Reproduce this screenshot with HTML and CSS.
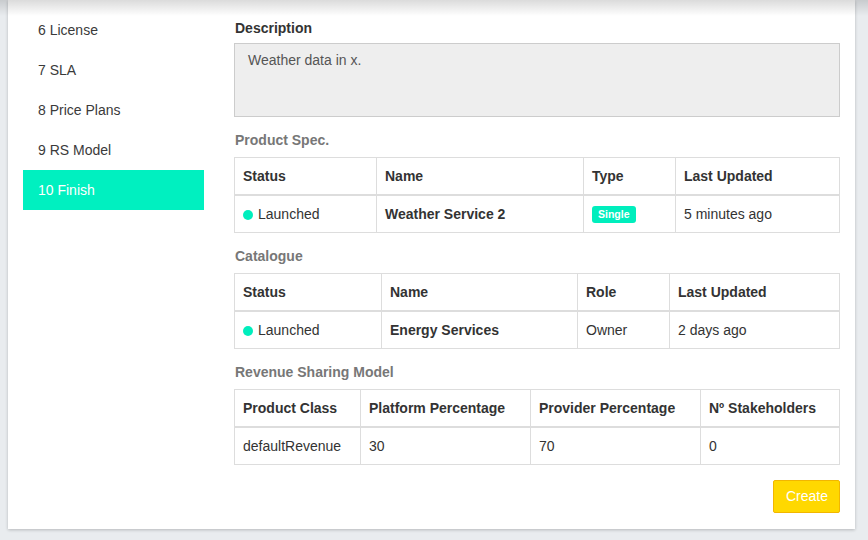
FILE: index.html
```html
<!DOCTYPE html>
<html>
<head>
<meta charset="utf-8">
<link rel="stylesheet" href="styles.css">
</head>
<body>
<div class="top-shade"></div>
<div class="card">
  <nav class="steps">
    <div class="step">6 License</div>
    <div class="step">7 SLA</div>
    <div class="step">8 Price Plans</div>
    <div class="step">9 RS Model</div>
    <div class="step active">10 Finish</div>
  </nav>
  <main class="main">
    <div class="label">Description</div>
    <div class="desc">Weather data in x.</div>

    <div class="section">Product Spec.</div>
    <table class="tbl spec">
      <colgroup><col class="c1"><col class="c2"><col class="c3"><col class="c4"></colgroup>
      <thead><tr><th>Status</th><th>Name</th><th>Type</th><th>Last Updated</th></tr></thead>
      <tbody><tr><td><span class="dot"></span>Launched</td><td class="strong">Weather Service 2</td><td><span class="badge">Single</span></td><td>5 minutes ago</td></tr></tbody>
    </table>

    <div class="section">Catalogue</div>
    <table class="tbl cat">
      <colgroup><col class="c1"><col class="c2"><col class="c3"><col class="c4"></colgroup>
      <thead><tr><th>Status</th><th>Name</th><th>Role</th><th>Last Updated</th></tr></thead>
      <tbody><tr><td><span class="dot"></span>Launched</td><td class="strong">Energy Services</td><td>Owner</td><td>2 days ago</td></tr></tbody>
    </table>

    <div class="section">Revenue Sharing Model</div>
    <table class="tbl rs">
      <colgroup><col class="c1"><col class="c2"><col class="c3"><col class="c4"></colgroup>
      <thead><tr><th>Product Class</th><th>Platform Percentage</th><th>Provider Percentage</th><th>Nº Stakeholders</th></tr></thead>
      <tbody><tr><td>defaultRevenue</td><td>30</td><td>70</td><td>0</td></tr></tbody>
    </table>

    <div class="actions"><button class="btn">Create</button></div>
  </main>
</div>
</body>
</html>
```

FILE: styles.css
```css
* { box-sizing: border-box; }
html, body { margin: 0; padding: 0; }
body {
  background: #e9ecef;
  font-family: "Liberation Sans", Arial, Helvetica, sans-serif;
  font-size: 14px;
  line-height: 20px;
  color: #333;
  width: 868px;
  height: 540px;
  overflow: hidden;
}
.top-shade {
  position: absolute;
  left: 0; top: 0;
  width: 868px;
  height: 16px;
  background: linear-gradient(to bottom, rgba(0,0,0,0.14), rgba(0,0,0,0));
  pointer-events: none;
  z-index: 2;
}
.card {
  margin-left: 8px;
  width: 847px;
  background: #fff;
  box-shadow: 0 1px 3px rgba(0,0,0,0.22);
  display: flex;
  gap: 30px;
  padding: 10px 15px 16px 15px;
}
.steps { width: 181px; flex: none; }
.step {
  height: 40px;
  line-height: 40px;
  padding-left: 15px;
  color: #3a3a3a;
}
.step.active { background: #00f0c0; color: #fff; }
.main { flex: 1; padding-top: 8px; }
.label { font-weight: bold; margin-bottom: 5px; padding-left: 1px; }
.desc {
  height: 74px;
  background: #eee;
  border: 1px solid #ccc;
  padding: 6px 13px;
  color: #555;
}
.section {
  font-weight: bold;
  color: #777;
  margin: 13px 0 7px;
  padding-left: 1px;
}
.tbl {
  width: 605px;
  border-collapse: collapse;
  table-layout: fixed;
}
.tbl th, .tbl td {
  border: 1px solid #ddd;
  padding: 8px;
  text-align: left;
  line-height: 20px;
  white-space: nowrap;
}
.tbl th { border-bottom-width: 2px; font-weight: bold; color: #333; }
.tbl td.strong { font-weight: bold; }
.spec .c1 { width: 142px; } .spec .c2 { width: 207px; } .spec .c3 { width: 92px; } .spec .c4 { width: 164px; }
.cat .c1 { width: 147px; } .cat .c2 { width: 196px; } .cat .c3 { width: 92px; } .cat .c4 { width: 170px; }
.rs .c1 { width: 126px; } .rs .c2 { width: 170px; } .rs .c3 { width: 170px; } .rs .c4 { width: 139px; }
.dot {
  display: inline-block;
  width: 10px; height: 10px;
  border-radius: 50%;
  background: #00eebd;
  margin-right: 5px;
  vertical-align: -1px;
}
.badge {
  display: inline-block;
  background: #00eebd;
  color: #fff;
  font-weight: bold;
  font-size: 10.5px;
  line-height: 1;
  padding: 3px 6px 3px;
  border-radius: 3px;
  vertical-align: 1px;
}
.actions { display: flex; justify-content: flex-end; margin-top: 15px; }
.btn {
  font-family: inherit;
  font-size: 14px;
  line-height: 19px;
  color: #fff;
  background: #ffd800;
  border: 1px solid #f2b600;
  border-radius: 2px;
  padding: 0 12px;
  width: 67px;
  height: 33px;
}
```
